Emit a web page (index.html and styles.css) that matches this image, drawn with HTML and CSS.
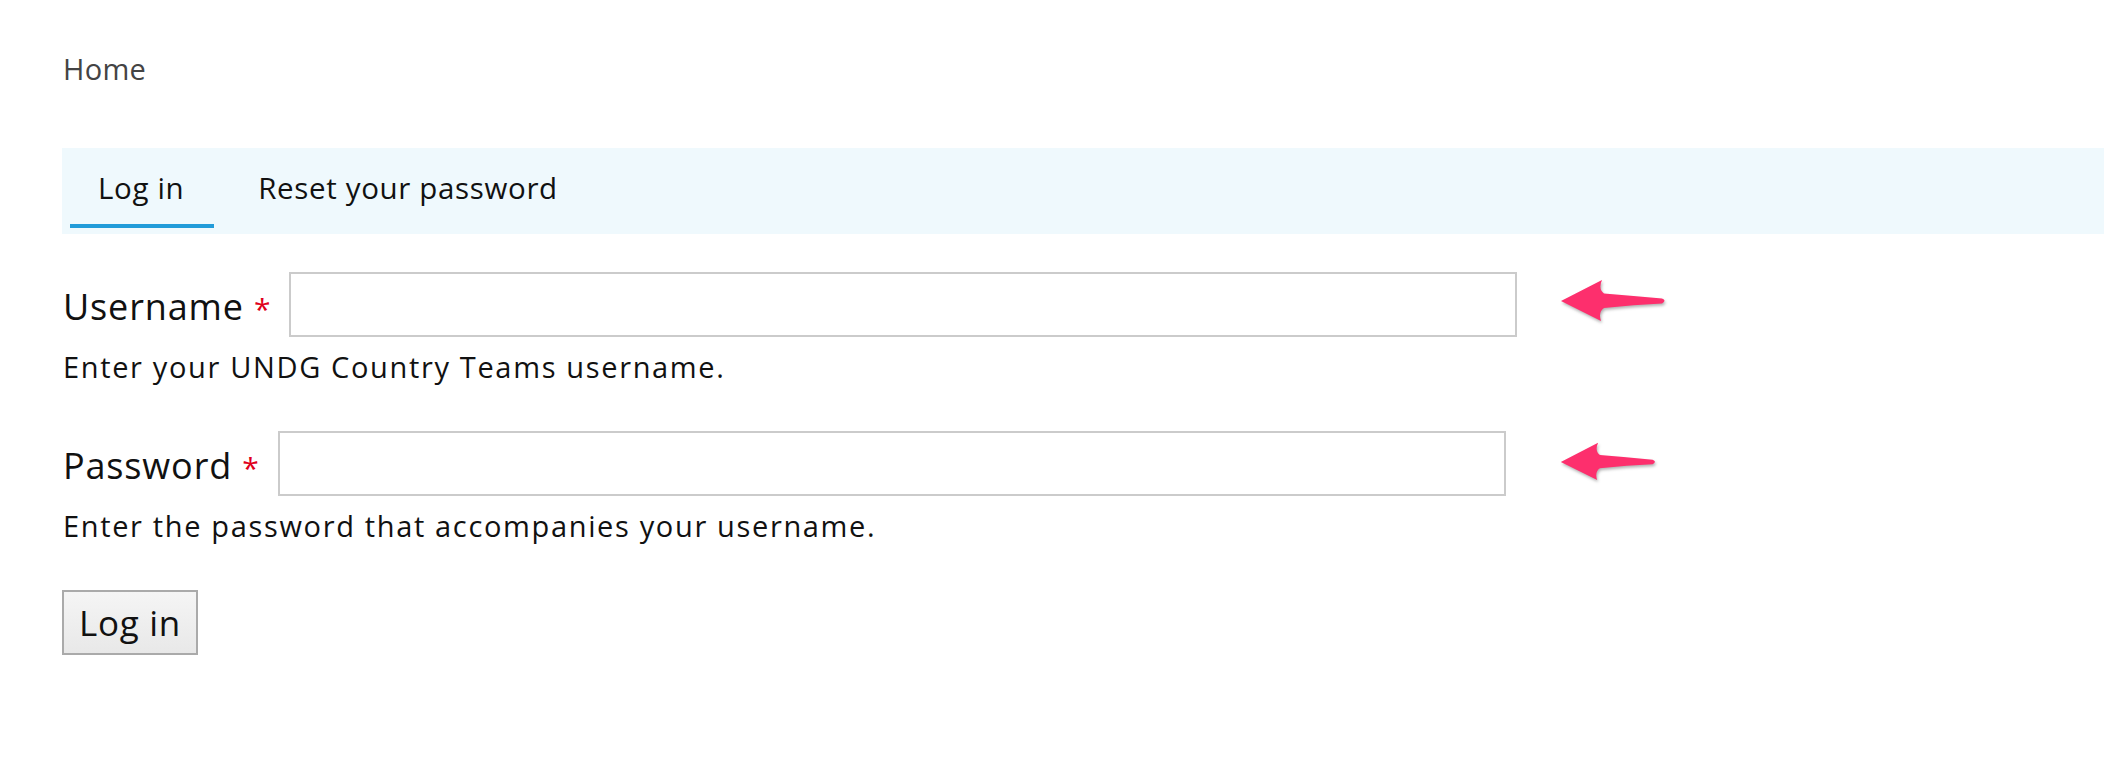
FILE: index.html
```html
<!DOCTYPE html>
<html lang="en">
<head>
<meta charset="utf-8">
<title>Log in</title>
<link rel="stylesheet" href="styles.css">
</head>
<body>
<div class="page">
  <nav class="breadcrumb"><a href="#" class="crumb">Home</a></nav>
  <ul class="tabs">
    <li class="tab tab-active"><a href="#">Log in</a></li>
    <li class="tab"><a href="#">Reset your password</a></li>
  </ul>
  <form class="login-form">
    <div class="field">
      <div class="field-row">
        <label class="label" for="user">Username <span class="req">*</span></label>
        <input class="text-input" id="user" type="text">
        <svg class="arrow arrow-one" viewBox="0 0 110 50" width="110" height="50"><path d="M2,26 L43,5 Q39,14 45,18.5 Q75,21 103,23.5 Q108,25.5 103,28.5 Q75,29.5 45,33 Q39,37 42,46 Z"/></svg>
      </div>
      <div class="description">Enter your UNDG Country Teams username.</div>
    </div>
    <div class="field">
      <div class="field-row">
        <label class="label" for="pass">Password <span class="req">*</span></label>
        <input class="text-input" id="pass" type="password">
        <svg class="arrow arrow-two" viewBox="0 0 110 50" width="100" height="46"><path d="M2,26 L43,5 Q39,14 45,18.5 Q75,21 103,23.5 Q108,25.5 103,28.5 Q75,29.5 45,33 Q39,37 42,46 Z"/></svg>
      </div>
      <div class="description">Enter the password that accompanies your username.</div>
    </div>
    <div class="actions">
      <button type="button" class="button">Log in</button>
    </div>
  </form>
</div>
</body>
</html>
```

FILE: styles.css
```css
html, body {
  margin: 0;
  padding: 0;
  background: #ffffff;
}
body {
  font-family: "Open Sans", "Noto Sans", sans-serif;
  color: #111;
}
.page {
  padding: 49px 0 0 62px;
}
.breadcrumb {
  font-size: 29px;
  line-height: 40px;
  padding-left: 1px;
  letter-spacing: 0.3px;
}
.crumb {
  color: #444;
  text-decoration: none;
}
.tabs {
  list-style: none;
  margin: 59px 0 0 0;
  padding: 20px 0 6px 8px;
  display: flex;
  gap: 16px;
  background: #eff9fd;
}
.tab a {
  display: block;
  padding: 0 30px 16px 28px;
  font-size: 29.5px;
  line-height: 40px;
  letter-spacing: 0.65px;
  color: #111;
  text-decoration: none;
  border-bottom: 4px solid transparent;
}
.tab-active a {
  border-bottom-color: #229cd9;
}
.login-form {
  margin-top: 38px;
  padding-left: 1px;
}
.field {
  margin-bottom: 44px;
}
.field-row {
  display: flex;
  align-items: center;
  height: 65px;
}
.label {
  padding-top: 5px;
  font-size: 36px;
  line-height: 49px;
  letter-spacing: 0.85px;
  color: #111;
}
.req {
  color: #e0001b;
  font-size: 30px;
}
.text-input {
  box-sizing: border-box;
  width: 1228px;
  height: 65px;
  margin-left: 18px;
  border: 2px solid #cbcbcb;
  background: #fff;
  padding: 0 10px;
  font: inherit;
}
.arrow {
  fill: #fd2f6d;
  filter: drop-shadow(1px 2px 1.5px rgba(0, 0, 0, 0.3));
}
.arrow-one {
  margin-left: 42px;
  margin-top: -10px;
}
.arrow-two {
  margin-left: 53px;
  margin-top: -6px;
}
.description {
  margin-top: 10px;
  font-size: 29px;
  line-height: 40px;
  letter-spacing: 1.65px;
  color: #111;
}
.button {
  box-sizing: border-box;
  height: 65px;
  padding: 0 15px 0 15px;
  margin-left: -1px;
  font-family: "Open Sans", "Noto Sans", sans-serif;
  font-size: 35px;
  line-height: 40px;
  letter-spacing: 0.7px;
  color: #111;
  border: 2px solid #aaa;
  border-radius: 0;
  background: linear-gradient(#f5f5f5, #e8e8e8);
}
```
